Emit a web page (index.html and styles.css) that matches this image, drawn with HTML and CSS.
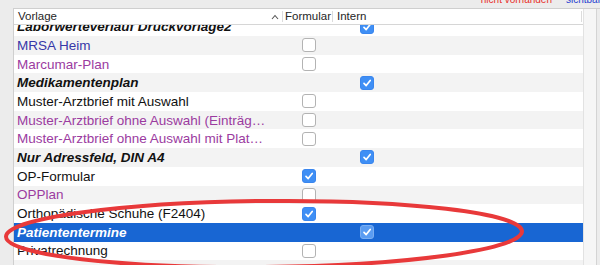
FILE: index.html
```html
<!DOCTYPE html>
<html lang="de">
<head>
    <meta charset="UTF-8">
    <meta name="viewport" content="width=device-width, initial-scale=1.0">
    <title>Vorlagen</title>
    <link rel="stylesheet" href="styles.css">
</head>
<body>
    <div class="legend">
        <span class="legend-missing">nicht vorhanden</span>
        <span class="legend-visible">sichtbar</span>
    </div>

    <div class="frame">
        <div class="table">
            <div class="table-head">
                <div class="head-cell head-name">
                    <span>Vorlage</span>
                    <svg class="sort-caret" width="8" height="6" viewBox="0 0 8 6"><path d="M1 5 L4 1.5 L7 5" fill="none" stroke="#555" stroke-width="1.1"/></svg>
                </div>
                <div class="head-cell head-form">Formular</div>
                <div class="head-cell">Intern</div>
            </div>

            <div class="table-body">
                <div class="rows">
                    <div class="row group"><div class="name">Laborwerteverlauf Druckvorlage2</div><div class="cell"></div><div class="cell intern"><span class="box checked"></span></div></div>
                    <div class="row odd"><div class="name blue">MRSA Heim</div><div class="cell"><span class="box"></span></div><div class="cell"></div></div>
                    <div class="row"><div class="name purple">Marcumar-Plan</div><div class="cell"><span class="box"></span></div><div class="cell"></div></div>
                    <div class="row odd group"><div class="name">Medikamentenplan</div><div class="cell"></div><div class="cell intern"><span class="box checked"></span></div></div>
                    <div class="row"><div class="name">Muster-Arztbrief mit Auswahl</div><div class="cell"><span class="box"></span></div><div class="cell"></div></div>
                    <div class="row odd"><div class="name purple">Muster-Arztbrief ohne Auswahl (Einträg…</div><div class="cell"><span class="box"></span></div><div class="cell"></div></div>
                    <div class="row"><div class="name purple">Muster-Arztbrief ohne Auswahl mit Plat…</div><div class="cell"><span class="box"></span></div><div class="cell"></div></div>
                    <div class="row odd group"><div class="name">Nur Adressfeld, DIN A4</div><div class="cell"></div><div class="cell intern"><span class="box checked"></span></div></div>
                    <div class="row"><div class="name">OP-Formular</div><div class="cell"><span class="box checked"></span></div><div class="cell"></div></div>
                    <div class="row odd"><div class="name purple">OPPlan</div><div class="cell"><span class="box"></span></div><div class="cell"></div></div>
                    <div class="row"><div class="name">Orthopädische Schuhe (F2404)</div><div class="cell"><span class="box checked"></span></div><div class="cell"></div></div>
                    <div class="row selected group"><div class="name">Patiententermine</div><div class="cell"></div><div class="cell intern"><span class="box checked"></span></div></div>
                    <div class="row"><div class="name">Privatrechnung</div><div class="cell"><span class="box"></span></div><div class="cell"></div></div>
                    <div class="row odd"><div class="name">Quartalsliste</div><div class="cell"></div><div class="cell"></div></div>
                </div>
            </div>
        </div>
        <div class="scroll-track"></div>
    </div>

    <svg class="marker" width="600" height="265" viewBox="0 0 600 265">
        <ellipse cx="264" cy="234" rx="258" ry="33" transform="rotate(-0.6 264 234)" fill="none" stroke="#e8393a" stroke-width="4"/>
    </svg>
</body>
</html>
```

FILE: styles.css
```css
body {
    margin: 0;
    padding: 0;
    width: 600px;
    height: 265px;
    overflow: hidden;
    background-color: #ececec;
    font-family: "Liberation Sans", Arial, sans-serif;
    font-size: 13.5px;
    color: #111;
}
.legend {
    height: 8px;
    display: flex;
    justify-content: flex-end;
    align-items: flex-end;
    gap: 14px;
    overflow: hidden;
    font-size: 10px;
    line-height: 10px;
    margin-right: -1px;
}
.legend span {
    margin-bottom: 3px;
}
.legend-missing {
    color: #e8302a;
}
.legend-visible {
    color: #2a3fd0;
}
.frame {
    display: flex;
    margin-left: 13px;
    height: 257px;
    border-top: 1px solid #cfcfcf;
    border-left: 1px solid #cfcfcf;
}
.table {
    width: 569px;
    background: #fff;
    display: flex;
    flex-direction: column;
    border-right: 1px solid #e2e2e2;
}
.scroll-track {
    width: 12px;
    background: #f6f6f6;
    border-right: 1px solid #d4d4d4;
}
.table-head {
    height: 15px;
    display: grid;
    grid-template-columns: 269px 50px 1fr;
    border-bottom: 1px solid #d6d6d6;
    font-size: 11.5px;
    color: #262626;
}
.head-cell {
    padding-left: 4px;
    border-right: 1px solid #dcdcdc;
    margin: 2px 0;
    line-height: 11px;
    white-space: nowrap;
}
.head-form {
    padding-left: 2px;
}
.head-cell:last-child {
    margin-right: 1px;
}
.head-name {
    display: flex;
    align-items: center;
    justify-content: space-between;
    padding-right: 3px;
}
.sort-caret {
    margin-top: 1px;
}
.table-body {
    flex: 1;
    overflow: hidden;
}
.rows {
    margin-top: -7.7px;
}
.row {
    height: 18.7px;
    display: grid;
    grid-template-columns: 269px 50px 1fr;
    align-items: center;
}
.row.odd {
    background: #f3f3f3;
}
.row.group .name {
    font-weight: bold;
    font-style: italic;
}
.row.selected {
    background: #1866d3;
    color: #fff;
}
.name {
    padding-left: 3px;
    white-space: nowrap;
    overflow: hidden;
}
.name.blue {
    color: #3737a8;
}
.name.purple {
    color: #9b3b9f;
}
.cell {
    display: flex;
    justify-content: center;
    padding-left: 2px;
}
.cell.intern {
    justify-content: flex-start;
    padding-left: 27px;
}
.box {
    width: 12px;
    height: 12px;
    border: 1px solid #b3b3b3;
    border-radius: 3px;
    background: #fff;
    box-sizing: content-box;
    display: block;
}
.box.checked {
    border-color: #3a86ee;
    background: #3f8ff5 url("data:image/svg+xml,%3Csvg xmlns='http://www.w3.org/2000/svg' width='12' height='12' viewBox='0 0 12 12'%3E%3Cpath d='M3 6.4 L5.2 8.6 L9.2 3.4' fill='none' stroke='white' stroke-width='1.7' stroke-linecap='round' stroke-linejoin='round'/%3E%3C/svg%3E") center no-repeat;
}
.row.selected .box.checked {
    background-color: #5a9cf2;
    border-color: #7aaef2;
}
.marker {
    position: absolute;
    left: 0;
    top: 0;
    pointer-events: none;
}
```
